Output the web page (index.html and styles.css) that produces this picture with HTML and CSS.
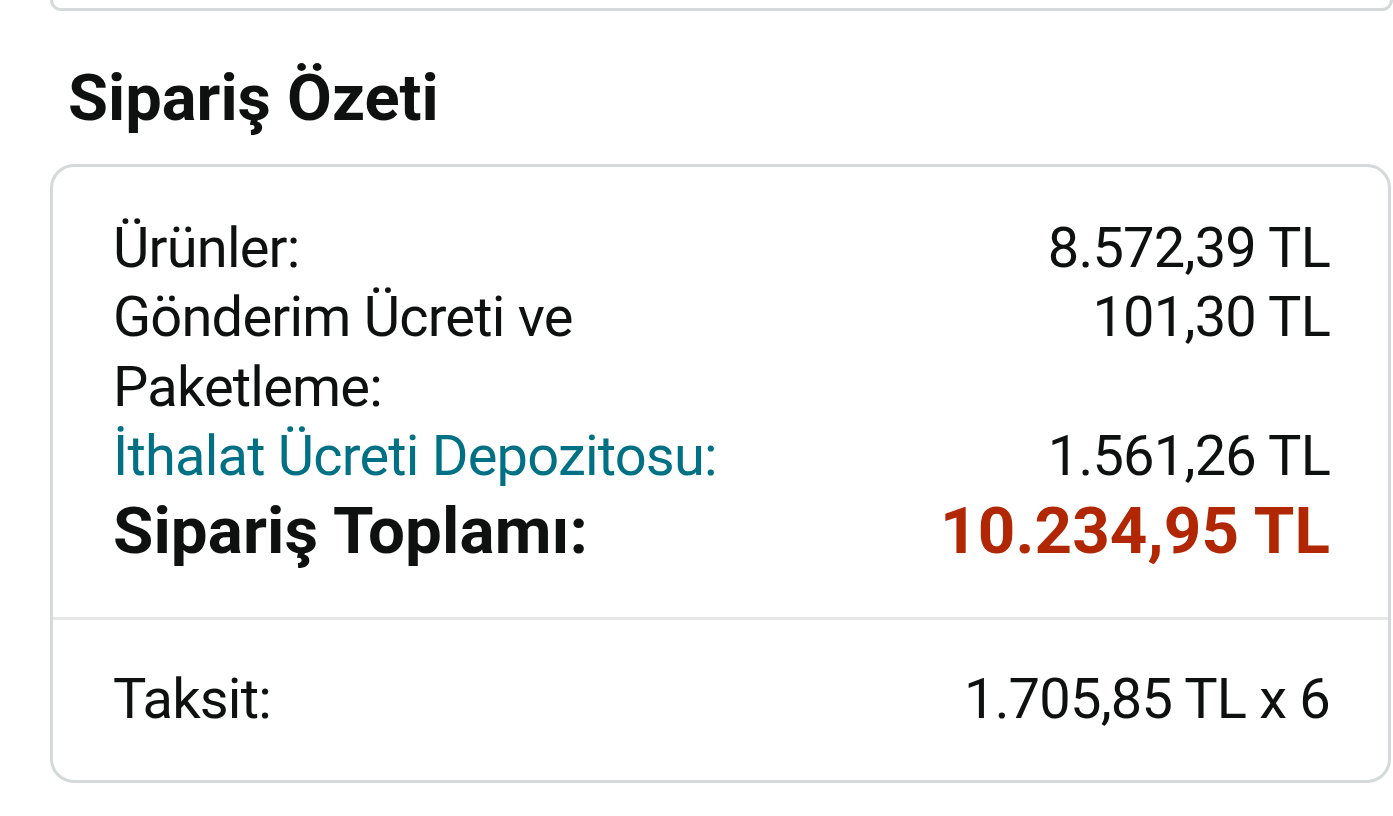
FILE: index.html
```html
<!DOCTYPE html>
<html lang="tr">
<head>
<meta charset="utf-8">
<title>Sipariş Özeti</title>
<link rel="stylesheet" href="styles.css">
</head>
<body>
<div class="prev-card"></div>
<h2 class="title">Sipariş Özeti</h2>
<section class="summary">
  <div class="lines">
    <div class="row"><span class="label">Ürünler:</span><span class="value">8.572,39 TL</span></div>
    <div class="row"><span class="label">Gönderim Ücreti ve<br>Paketleme:</span><span class="value">101,30 TL</span></div>
    <div class="row"><span class="label link">İthalat Ücreti Depozitosu:</span><span class="value">1.561,26 TL</span></div>
    <div class="row total"><span class="label">Sipariş Toplamı:</span><span class="value price">10.234,95 TL</span></div>
  </div>
  <div class="installment">
    <div class="row"><span class="label">Taksit:</span><span class="value">1.705,85 TL x 6</span></div>
  </div>
</section>
</body>
</html>
```

FILE: styles.css
```css
html, body {
  margin: 0;
  padding: 0;
  background: #ffffff;
}
body {
  font-family: Roboto, "Noto Sans", "Liberation Sans", sans-serif;
  color: #0f1111;
  width: 1393px;
  height: 816px;
  overflow: hidden;
}
.prev-card {
  margin-left: 50px;
  width: 1337px;
  height: 8px;
  border: 3px solid #d5d9d9;
  border-top: none;
  border-radius: 0 0 24px 24px;
}
.title {
  margin: 0;
  padding: 49px 0 0 68px;
  font-size: 65px;
  font-weight: 700;
  line-height: 76px;
  height: 76px;
}
.summary {
  margin: 28px 0 0 50px;
  width: 1335px;
  border: 3px solid #d5d9d9;
  border-radius: 24px;
}
.lines {
  padding: 47px 58px 45px 60px;
  border-bottom: 3px solid #e7e7e7;
}
.row {
  display: flex;
  justify-content: space-between;
  align-items: flex-start;
  font-size: 56px;
  line-height: 69.3px;
  letter-spacing: -0.8px;
}
.label.link {
  color: #007185;
}
.row.total {
  font-size: 65.5px;
  font-weight: 700;
  line-height: 80.6px;
  letter-spacing: 0.1px;
}
.price {
  color: #b12704;
}
.installment {
  padding: 45px 58px 46px 60px;
}
```
